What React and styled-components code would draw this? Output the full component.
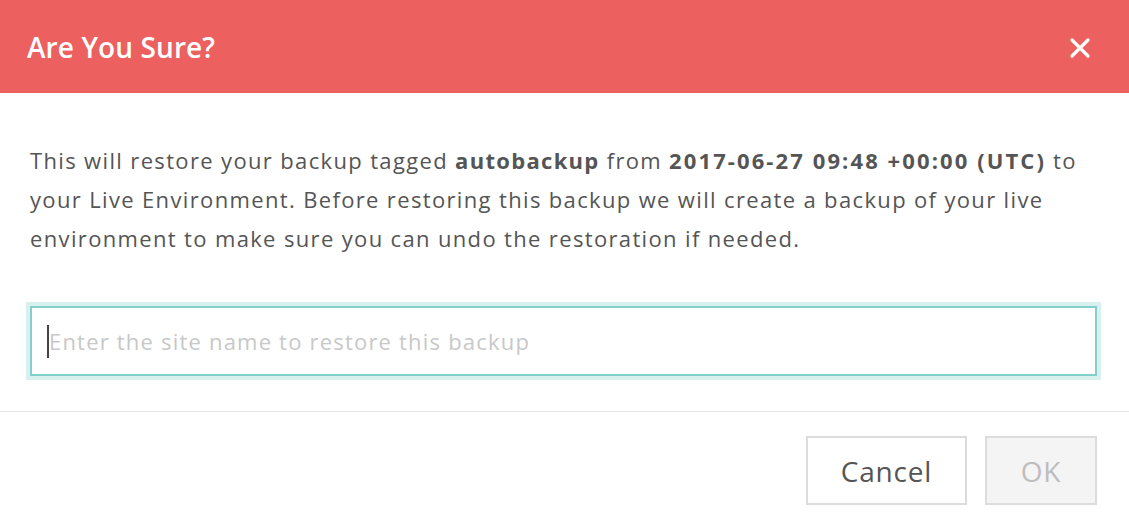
import React from "react";
import styled, { createGlobalStyle } from "styled-components";

const GlobalStyle = createGlobalStyle`
  html, body {
    margin: 0;
    padding: 0;
    background: #fff;
  }
  body {
    font-family: "Open Sans", "Noto Sans", "Liberation Sans", sans-serif;
    color: #555;
  }
`;

const Modal = styled.div`
  width: 1129px;
  height: 526px;
  display: flex;
  flex-direction: column;
  background: #fff;
  overflow: hidden;
`;

const Header = styled.div`
  height: 93px;
  flex-shrink: 0;
  display: flex;
  align-items: center;
  justify-content: space-between;
  padding: 0 38px 0 27px;
  background: #ec6060;
`;

const Title = styled.h1`
  margin: 0;
  font-size: 28px;
  font-weight: 600;
  color: #fff;
  letter-spacing: 0.1px;
`;

const CloseButton = styled.button`
  display: flex;
  align-items: center;
  justify-content: center;
  padding: 0;
  border: 0;
  background: transparent;
  cursor: pointer;
  margin-top: 2px;
`;

const Body = styled.div`
  padding: 48px 32px 0 30px;
`;

const Message = styled.p`
  margin: 0;
  font-size: 22px;
  line-height: 39px;
  color: #555;
  letter-spacing: 1.35px;
`;

const Bold = styled.strong`
  font-weight: 700;
  letter-spacing: ${(p) => p.$spacing || 1.3}px;
`;

const InputWrap = styled.div`
  position: relative;
  margin-top: 48px;
`;

const SiteInput = styled.input`
  box-sizing: border-box;
  width: 100%;
  height: 70px;
  padding: 0 16px 0 17px;
  border: 2px solid #82d0cc;
  border-radius: 0;
  outline: none;
  box-shadow: 0 0 0 4px #d8f1ef;
  font-family: inherit;
  font-size: 22px;
  letter-spacing: 1.2px;
  color: #555;
  caret-color: transparent;

  &::placeholder {
    color: #c8c8c8;
  }
`;

const Caret = styled.span`
  position: absolute;
  left: 17px;
  top: 19px;
  width: 2px;
  height: 33px;
  background: #444;
`;

const Divider = styled.hr`
  margin: 35px 0 0;
  border: 0;
  border-top: 1px solid #e6e6e6;
`;

const Footer = styled.div`
  display: flex;
  justify-content: flex-end;
  gap: 18px;
  padding: 24px 32px 0 30px;
`;

const Button = styled.button`
  box-sizing: border-box;
  height: 69px;
  width: ${(p) => p.$width}px;
  padding: 0;
  border: 2px solid #dcdcdc;
  background: ${(p) => (p.disabled ? "#f4f4f4" : "#fff")};
  color: ${(p) => (p.disabled ? "#bdbdbd" : "#555")};
  font-family: inherit;
  font-size: 28px;
  letter-spacing: 0.8px;
  cursor: ${(p) => (p.disabled ? "default" : "pointer")};
`;

const App = () => {
  return (
    <>
      <GlobalStyle />
      <Modal>
        <Header>
          <Title>Are You Sure?</Title>
          <CloseButton aria-label="Close">
            <svg width="22" height="22" viewBox="0 0 22 22">
              <path
                d="M3 3 L19 19 M19 3 L3 19"
                stroke="#fff"
                strokeWidth="3.2"
                strokeLinecap="round"
              />
            </svg>
          </CloseButton>
        </Header>
        <Body>
          <Message>
            This will restore your backup tagged <Bold>autobackup</Bold> from{" "}
            <Bold $spacing={2.1}>2017-06-27 09:48 +00:00 (UTC)</Bold> to your
            Live Environment. Before restoring this backup we will create a
            backup of your live environment to make sure you can undo the
            restoration if needed.
          </Message>
          <InputWrap>
            <SiteInput placeholder="Enter the site name to restore this backup" />
            <Caret />
          </InputWrap>
        </Body>
        <Divider />
        <Footer>
          <Button $width={161}>Cancel</Button>
          <Button $width={112} disabled>
            OK
          </Button>
        </Footer>
      </Modal>
    </>
  );
};

export default App;
